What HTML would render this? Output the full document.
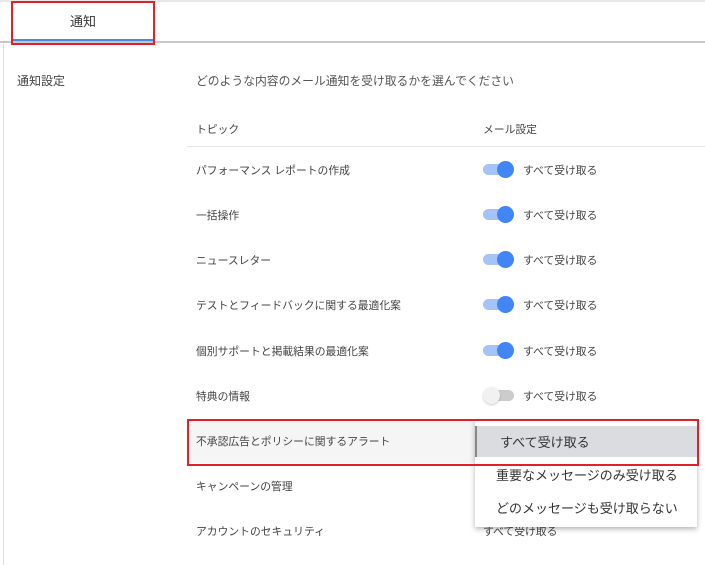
<!DOCTYPE html>
<html><head><meta charset="utf-8"><style>
body{margin:0;width:705px;height:565px;background:#fff;position:relative;overflow:hidden;font-family:"Liberation Sans","Noto Sans CJK JP",sans-serif;color:#3c4043}
.a{position:absolute;white-space:nowrap}
.t{font-size:10.8px;color:#444}
.tg{position:absolute;width:28px;height:11px;border-radius:6px;background:#a5c3f7}
.tg::after{content:"";position:absolute;right:-3px;top:-3px;width:17px;height:17px;border-radius:50%;background:#4285f4}
.tg.off{background:#ccc}
.tg.off::after{left:-3px;right:auto;background:#f1f1f1;box-shadow:0 1px 2px rgba(0,0,0,.2)}
</style></head><body>
<div class="a" style="left:0;top:0;width:705px;height:2px;background:#e8e8e8"></div>
<div class="a" style="left:0;top:41px;width:705px;height:2px;background:#c8c8c8"></div>
<div class="a" style="left:3px;top:43px;width:1px;height:522px;background:#ddd"></div>
<div class="a" style="left:12px;top:39px;width:141px;height:2px;background:#4a86e8"></div>
<div class="a" style="left:11px;top:1px;width:140px;height:40px;border:2px solid #e0202a"></div>
<div class="a" style="left:70px;top:11px;font-size:13px;color:#333">通知</div>
<div class="a" style="left:17px;top:72px;font-size:12px;color:#444">通知設定</div>
<div class="a" style="left:196px;top:72px;font-size:11.8px;color:#555">どのような内容のメール通知を受け取るかを選んでください</div>
<div class="a t" style="left:196px;top:121px">トピック</div>
<div class="a t" style="left:483px;top:121px">メール設定</div>
<div class="a" style="left:187px;top:146px;width:518px;height:1px;background:#e5e5e5"></div>

<div class="a t" style="left:196px;top:162px">パフォーマンス レポートの作成</div>
<div class="tg" style="left:483px;top:164px"></div><div class="a t" style="left:523px;top:162px">すべて受け取る</div>
<div class="a t" style="left:196px;top:207px">一括操作</div>
<div class="tg" style="left:483px;top:209px"></div><div class="a t" style="left:523px;top:207px">すべて受け取る</div>
<div class="a t" style="left:196px;top:252px">ニュースレター</div>
<div class="tg" style="left:483px;top:254px"></div><div class="a t" style="left:523px;top:252px">すべて受け取る</div>
<div class="a t" style="left:196px;top:297px">テストとフィードバックに関する最適化案</div>
<div class="tg" style="left:483px;top:299px"></div><div class="a t" style="left:523px;top:297px">すべて受け取る</div>
<div class="a t" style="left:196px;top:343px">個別サポートと掲載結果の最適化案</div>
<div class="tg" style="left:483px;top:345px"></div><div class="a t" style="left:523px;top:343px">すべて受け取る</div>
<div class="a t" style="left:196px;top:388px">特典の情報</div>
<div class="tg off" style="left:486px;top:390px"></div><div class="a t" style="left:523px;top:388px">すべて受け取る</div>

<div class="a" style="left:189px;top:421px;width:290px;height:42px;background:#f5f5f5"></div>
<div class="a t" style="left:196px;top:433px">不承認広告とポリシーに関するアラート</div>
<div class="a t" style="left:196px;top:478px">キャンペーンの管理</div>
<div class="a t" style="left:196px;top:523px">アカウントのセキュリティ</div>
<div class="a t" style="left:483px;top:523px">すべて受け取る</div>

<div class="a" style="left:475px;top:420px;width:222px;height:107px;background:#fff;box-shadow:0 2px 5px rgba(0,0,0,.3)"></div>
<div class="a" style="left:475px;top:426px;width:222px;height:31px;background:#dadce0;border-left:2px solid #888;box-sizing:border-box"></div>
<div class="a" style="left:500px;top:432px;font-size:13px;color:#333">すべて受け取る</div>
<div class="a" style="left:496px;top:465px;font-size:13px;color:#333">重要なメッセージのみ受け取る</div>
<div class="a" style="left:496px;top:498px;font-size:13px;color:#333">どのメッセージも受け取らない</div>
<div class="a" style="left:187px;top:419px;width:508px;height:43px;border:2px solid #e0202a"></div>
</body></html>
